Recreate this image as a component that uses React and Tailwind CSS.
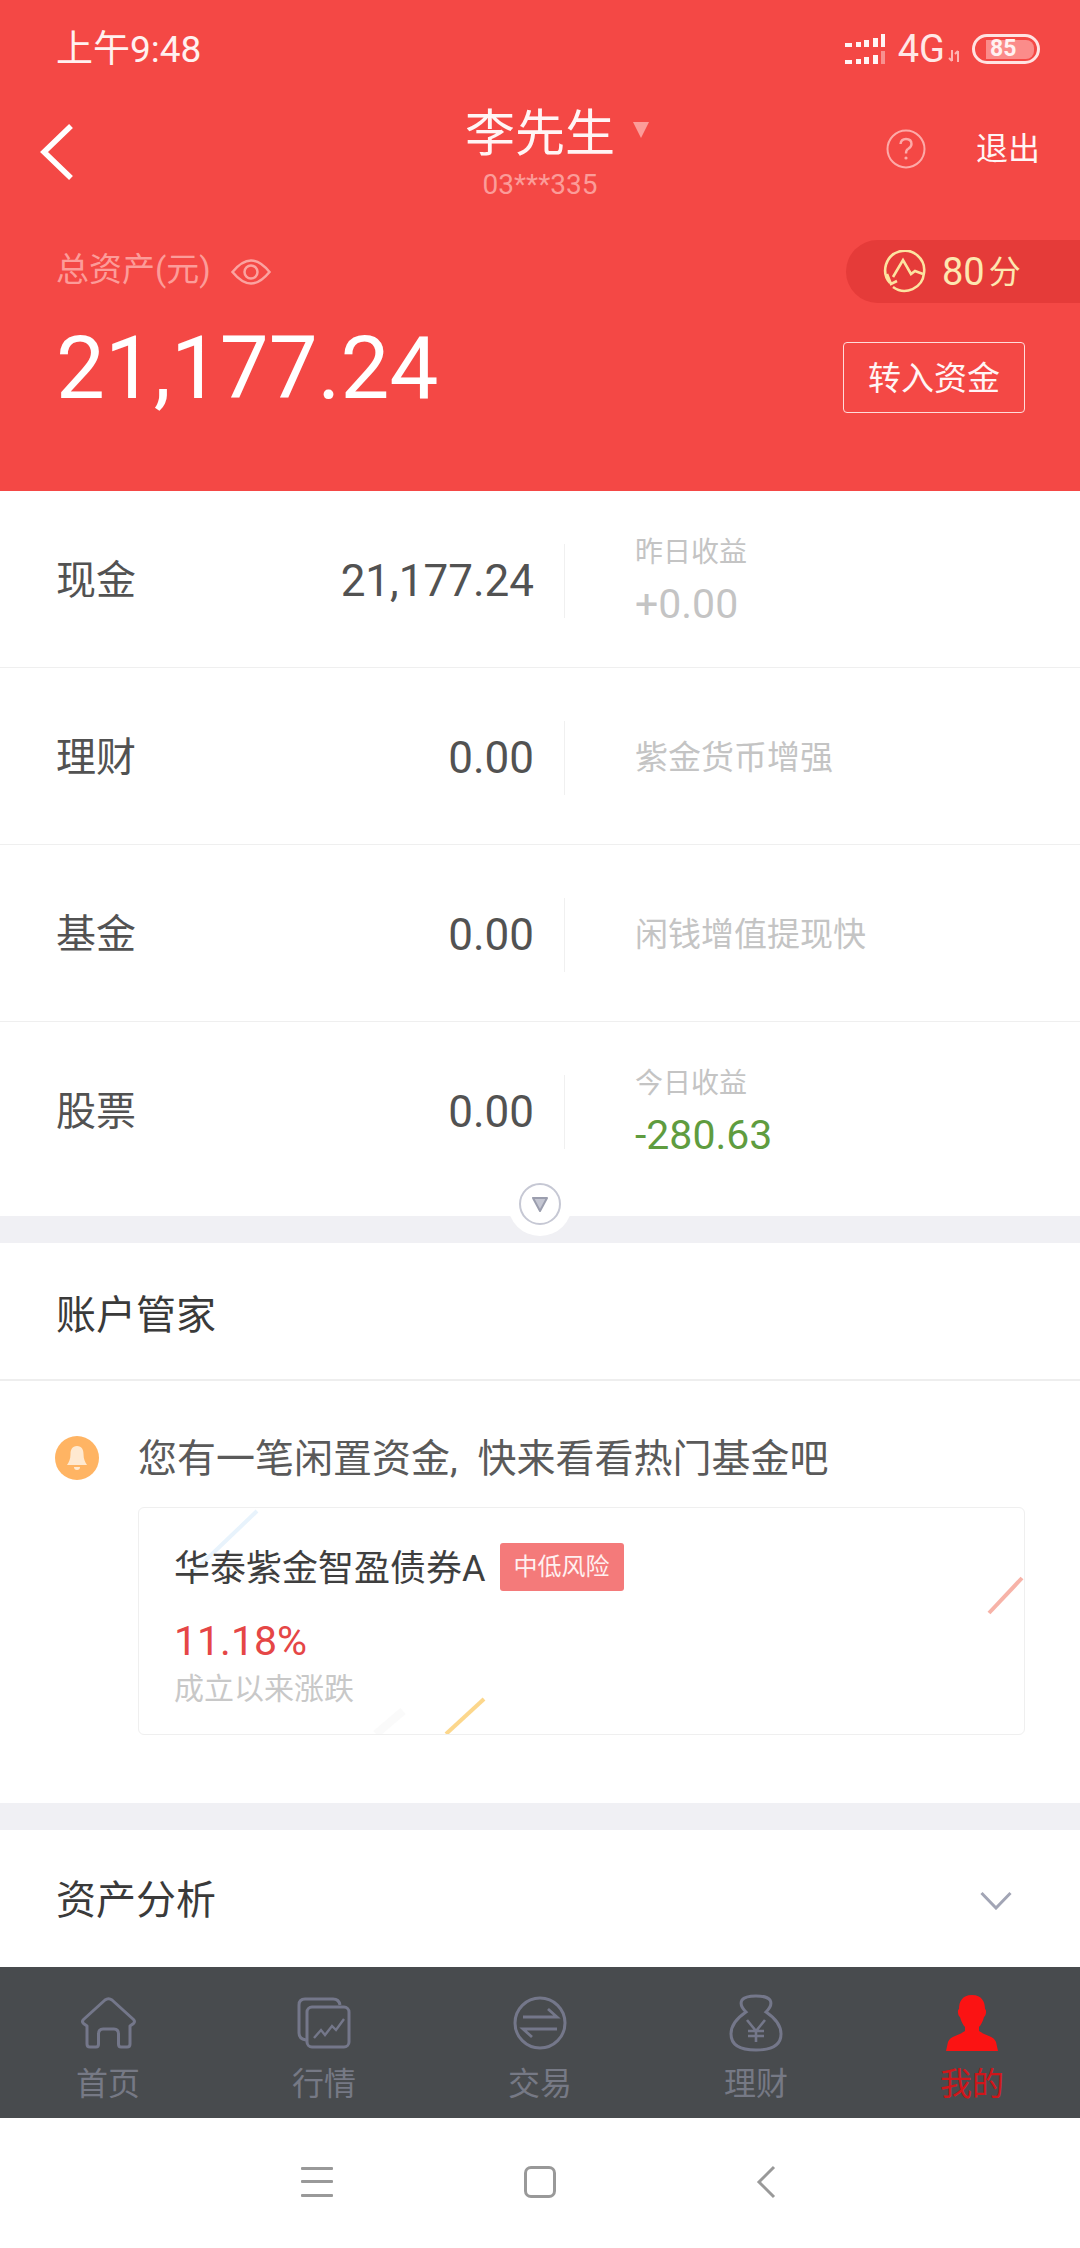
const font = "font-['Roboto','Noto_Sans_CJK_SC',sans-serif]";

function SignalIcon() {
  const bars = [
    [0, 7, 4],
    [11, 5, 5],
    [19, 5, 7],
    [28, 5, 9],
    [36, 4, 13],
  ];
  return (
    <svg width="40" height="30" viewBox="0 0 40 30">
      {bars.map(([x, w, h]) => (
        <rect key={x} x={x} y={13 - h} width={w} height={h} fill="#fff" opacity="0.95" />
      ))}
      {bars.map(([x, w, h]) => (
        <rect key={x} x={x} y={30 - h} width={w} height={h} fill="#fff" opacity={x === 36 ? 0.4 : 0.95} />
      ))}
    </svg>
  );
}

function Battery() {
  return (
    <div className="relative w-[68px] h-[30px] rounded-full border-[3px] border-[#ffe3e2] flex items-center">
      <div className="ml-[11px] w-[48px] h-[19px] bg-[#fb8c8a] rounded-r-[8px]" />
      <span className="absolute left-[15px] top-0 text-[23px] leading-[24px] font-bold text-[#fff2f2]">85</span>
    </div>
  );
}

function Eye() {
  return (
    <svg width="40" height="26" viewBox="0 0 40 26" fill="none" stroke="#fba3a0" strokeWidth="2.5">
      <path d="M1.5 13 Q11 1.5 20 1.5 Q29 1.5 38.5 13 Q29 24.5 20 24.5 Q11 24.5 1.5 13Z" />
      <circle cx="20" cy="13" r="6.5" />
    </svg>
  );
}

function ScoreIcon() {
  return (
    <svg width="44" height="44" viewBox="0 0 44 44" fill="none" stroke="#fde3a0" strokeWidth="2.6">
      <path d="M7 33 A19.5 19.5 0 1 1 41 23 A19.5 19.5 0 0 1 10 37" />
      <path d="M4 24 L8 34 L14 31" />
      <path d="M10 27 L20 10 L28 24 L32 21 L40 24" />
    </svg>
  );
}

function HomeIcon() {
  return (
    <svg width="57" height="52" viewBox="0 0 57 52" fill="none" stroke="#74778a" strokeWidth="3" strokeLinejoin="round">
      <path d="M7 29 L3.5 26.5 Q1.5 24.5 3.5 22.5 L25 3 Q28.5 0.5 32 3 L53.5 22.5 Q55.5 24.5 53.5 26.5 L50 29 V47 Q50 50 47 50 H41 Q38.5 50 38.5 47 V37 Q38.5 32 34 32 H23 Q18.5 32 18.5 37 V47 Q18.5 50 16 50 H10 Q7 50 7 47 Z" />
    </svg>
  );
}

function MarketIcon() {
  return (
    <svg width="54" height="52" viewBox="0 0 54 52" fill="none" stroke="#74778a" strokeWidth="3">
      <path d="M9 43 Q2 42 2 36 V8 Q2 2 8 2 H36 Q42 2 43 8" />
      <rect x="10" y="10" width="42" height="40" rx="5" />
      <path strokeWidth="2.4" d="M17 41 L24 33 L28 38 L35 29 L39 33 L47 22" />
    </svg>
  );
}

function TradeIcon() {
  return (
    <svg width="54" height="54" viewBox="0 0 54 54" fill="none" stroke="#74778a" strokeWidth="3">
      <circle cx="27" cy="27" r="25" />
      <path strokeWidth="2.8" d="M10 21 H44 L35 13" />
      <path strokeWidth="2.8" d="M44 33 H10 L19 41" />
    </svg>
  );
}

function BagIcon() {
  return (
    <svg width="54" height="58" viewBox="0 0 54 58" fill="none" stroke="#74778a" strokeWidth="3">
      <path d="M17 18 Q10 11 13 6 Q16 2 27 2 Q38 2 41 6 Q44 11 37 18 Q52 28 52 40 Q52 56 27 56 Q2 56 2 40 Q2 28 17 18 Z" />
      <path strokeWidth="2.6" d="M18 26 L27 37 L36 26 M27 37 V48 M19 37 H35 M19 42 H35" />
    </svg>
  );
}

function PersonIcon() {
  return (
    <svg width="52" height="58" viewBox="0 0 52 58" fill="#fb1313">
      <path d="M26 1 C16 1 13 8 13 15 C11 16 12 22 14 23 C15 27 17 31 19 33 V37 C14 41 4 42 2 48 L0 57 H52 L50 48 C48 42 38 41 33 37 V33 C35 31 37 27 38 23 C40 22 41 16 39 15 C39 8 36 1 26 1 Z" />
    </svg>
  );
}

function AssetRow({ label, value, sub, subValue, subClass, last }) {
  return (
    <div className={last ? "pb-[18px]" : "border-b border-[#efefef]"}>
      <div className="h-[176px] flex items-center pt-[4px]">
        <div className="w-[170px] pl-[56px] text-[40px] leading-[48px] text-[#525252]">{label}</div>
        <div className="w-[364px] text-right text-[44px] leading-[52px] text-[#525252]">{value}</div>
        <div className="ml-[30px] w-px h-[74px] bg-[#f0f0f0]" />
        <div className="ml-[70px]">
          {subValue ? (
            <>
              <div className="text-[28px] leading-[36px] text-[#c4c4c4]">{sub}</div>
              <div className={`mt-[9px] text-[41px] leading-[48px] ${subClass}`}>{subValue}</div>
            </>
          ) : (
            <div className="text-[33px] leading-[42px] text-[#c4c4c4]">{sub}</div>
          )}
        </div>
      </div>
    </div>
  );
}

function NavItem({ icon, label, active }) {
  return (
    <div className="flex-1 flex flex-col items-center">
      <div className="h-[60px] flex items-center justify-center">{icon}</div>
      <div className={`mt-[11px] text-[32px] leading-[40px] ${active ? "text-[#d0161a]" : "text-[#767985]"}`}>{label}</div>
    </div>
  );
}

export default function App() {
  return (
    <div className={`w-[1080px] h-[2248px] bg-white overflow-hidden ${font}`}>
      {/* Red header */}
      <div className="h-[491px] bg-[#f44845] text-white">
        <div className="h-[98px] px-[56px] flex items-center justify-between">
          <span className="text-[37px] leading-[44px] mt-[2px] text-[#fff1f0]">上午9:48</span>
          <div className="flex items-center -mr-[16px]">
            <SignalIcon />
            <span className="ml-[13px] text-[38px] leading-[44px] text-[#ffe8e7]">4G</span>
            <svg className="ml-[3px] mt-[14px]" width="14" height="14" viewBox="0 0 14 14" fill="none" stroke="#fdb5b3" strokeWidth="2">
              <path d="M4 1 V12 M1 9 L4 12 M10 13 V2 M7 5 L10 2" />
            </svg>
            <div className="ml-[10px]">
              <Battery />
            </div>
          </div>
        </div>

        <div className="h-[142px] flex items-start justify-between">
          <div className="w-[300px] pl-[40px] pt-[26px]">
            <svg width="34" height="56" viewBox="0 0 34 56" fill="none" stroke="#fff" strokeWidth="5.5">
              <path d="M31 2 L4 28 L31 54" />
            </svg>
          </div>
          <div className="flex flex-col items-center">
            <div className="relative text-[50px] leading-[64px] text-[#fff5f5] mt-[4px]">
              李先生
              <svg className="absolute left-[168px] top-[20px]" width="16" height="16" viewBox="0 0 16 16" fill="#fc9c99">
                <path d="M0 0 H16 L8 16 Z" />
              </svg>
            </div>
            <div className="mt-[2px] text-[28px] leading-[34px] text-[#fb9c99]">03***335</div>
          </div>
          <div className="w-[300px] pr-[40px] pt-[31px] flex items-center justify-end">
            <svg width="40" height="40" viewBox="0 0 40 40" fill="none" stroke="#fdaaa8" strokeWidth="2">
              <circle cx="20" cy="20" r="18.5" />
              <path strokeWidth="2.4" d="M14.5 15 Q15 10 20 10 Q25.5 10 25.5 15 Q25.5 18 22 20 Q20 21 20 24.5" />
              <circle cx="20" cy="29" r="1.6" fill="#fdaaa8" stroke="none" />
            </svg>
            <span className="ml-[50px] text-[32px] leading-[40px] text-[#fff5f5]">退出</span>
          </div>
        </div>

        <div className="flex justify-between">
          <div className="pl-[56px]">
            <div className="h-[60px] flex items-center text-[33px] text-[#fc9c99]">
              总资产(元)
              <span className="ml-[20px] mt-[3px]">
                <Eye />
              </span>
            </div>
            <div className="mt-[28px] text-[87px] leading-[80px] text-white">21,177.24</div>
          </div>
          <div className="flex flex-col items-end">
            <div className="w-[234px] h-[63px] bg-[#e53b39] rounded-l-[32px] flex items-center pl-[37px]">
              <ScoreIcon />
              <span className="ml-[15px] text-[38px] leading-[44px] text-[#fde7b0]">80</span>
              <span className="ml-[4px] text-[32px] leading-[44px] text-[#fde7b0]">分</span>
            </div>
            <div className="mt-[39px] mr-[55px] w-[182px] h-[71px] border border-[#ffdcdb] rounded-[4px] flex items-center justify-center pt-[2px] text-[33px] text-[#fff5f5]">
              转入资金
            </div>
          </div>
        </div>
      </div>

      {/* Asset rows */}
      <div className="relative">
        <AssetRow label="现金" value="21,177.24" sub="昨日收益" subValue="+0.00" subClass="text-[#c4c4c4]" />
        <AssetRow label="理财" value="0.00" sub="紫金货币增强" />
        <AssetRow label="基金" value="0.00" sub="闲钱增值提现快" />
        <AssetRow label="股票" value="0.00" sub="今日收益" subValue="-280.63" subClass="text-[#5f9c3f]" last />
        <div className="absolute left-[508px] -bottom-[20px] w-[64px] h-[64px] rounded-full bg-white flex items-center justify-center">
          <div className="w-[42px] h-[42px] rounded-full border-2 border-[#c6c8d4] flex items-center justify-center">
            <svg width="18" height="18" viewBox="0 0 18 18" fill="#c4c6d2" stroke="#9b9eae" strokeWidth="2" strokeLinejoin="round">
              <path d="M2 3 H16 L9 16 Z" />
            </svg>
          </div>
        </div>
      </div>

      <div className="h-[27px] bg-[#f0f0f4]" />

      <div className="h-[136px] flex items-center pl-[56px] pt-[9px] text-[40px] leading-[48px] text-[#3a3a3a]">账户管家</div>
      <div className="h-[2px] bg-[#eeeeee]" />

      {/* Adviser message */}
      <div className="h-[422px] pt-[52px]">
        <div className="h-[50px] flex items-center pl-[55px]">
          <div className="w-[44px] h-[44px] rounded-full bg-[#ffb463] flex items-center justify-center">
            <svg width="22" height="26" viewBox="0 0 22 26" fill="#ffe9d0">
              <path d="M11 1 C6 1 4.5 5 4.5 9 C4.5 14 3 17 1 20 H21 C19 17 17.5 14 17.5 9 C17.5 5 16 1 11 1 Z" />
              <path d="M8 22 H14 A3 3 0 0 1 8 22 Z" />
            </svg>
          </div>
          <span className="ml-[39px] mt-[2px] text-[39px] leading-[50px] text-[#5a5a5a]">
            您有一笔闲置资金<span className="mr-[10px]">,</span> 快来看看热门基金吧
          </span>
        </div>

        <div className="relative ml-[138px] mt-[24px] w-[887px] h-[228px] border border-[#efefef] rounded-[6px] pl-[35px] pt-[33px] overflow-hidden">
          <svg className="absolute left-0 top-0" width="887" height="228" fill="none" strokeWidth="4">
            <path d="M118 3 L50 68" stroke="#e8f3fc" />
            <path d="M883 70 L850 105" stroke="#f7b3a8" />
            <path d="M345 191 L307 226" stroke="#fcd78c" />
            <path d="M264 203 L237 226" stroke="#fafafa" strokeWidth="8" />
          </svg>
          <div className="relative flex items-center">
            <span className="mt-[4px] text-[36px] leading-[48px] text-[#3f3f3f]">华泰紫金智盈债券A</span>
            <span className="ml-[14px] w-[124px] h-[48px] bg-[#f47a7a] rounded-[3px] flex items-center justify-center text-[24px] text-[#fff0f0]">中低风险</span>
          </div>
          <div className="relative mt-[24px] text-[41px] leading-[48px] text-[#e54646]">11.18%</div>
          <div className="relative mt-[4px] text-[30px] leading-[40px] text-[#c8c8c8]">成立以来涨跌</div>
        </div>
      </div>

      <div className="h-[27px] bg-[#f0f0f4]" />

      <div className="h-[137px] flex items-center justify-between pl-[56px] pr-[68px] pt-[4px]">
        <span className="text-[40px] leading-[48px] text-[#3a3a3a]">资产分析</span>
        <svg width="32" height="19" viewBox="0 0 32 19" fill="none" stroke="#a2a5b5" strokeWidth="3">
          <path d="M1.5 2 L16 17 L30.5 2" />
        </svg>
      </div>

      {/* Tab bar */}
      <div className="h-[151px] bg-[#484b4e] flex pt-[26px]">
        <NavItem icon={<HomeIcon />} label="首页" />
        <NavItem icon={<MarketIcon />} label="行情" />
        <NavItem icon={<TradeIcon />} label="交易" />
        <NavItem icon={<BagIcon />} label="理财" />
        <NavItem icon={<PersonIcon />} label="我的" active />
      </div>

      {/* Android nav bar */}
      <div className="h-[130px] flex items-center justify-center pb-[2px]">
        <div className="w-[226px] pl-[6px] flex justify-center">
          <svg width="32" height="30" viewBox="0 0 32 30" fill="#999999">
            <rect y="0" width="32" height="3" rx="1" />
            <rect y="13" width="32" height="3" rx="1" />
            <rect y="27" width="32" height="3" rx="1" />
          </svg>
        </div>
        <div className="w-[226px] flex justify-center">
          <div className="w-[32px] h-[32px] rounded-[7px] border-[3px] border-[#999999]" />
        </div>
        <div className="w-[226px] flex justify-center">
          <svg width="20" height="34" viewBox="0 0 20 34" fill="none" stroke="#999999" strokeWidth="3">
            <path d="M18 2 L3 17 L18 32" />
          </svg>
        </div>
      </div>
    </div>
  );
}
